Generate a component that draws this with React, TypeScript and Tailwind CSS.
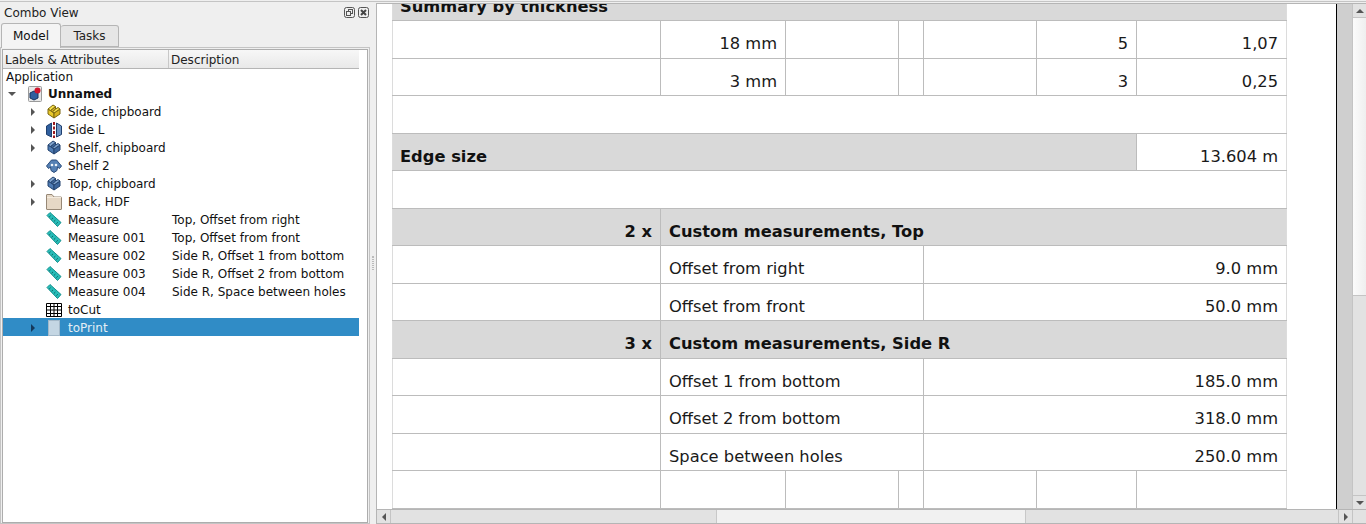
const sans = "font-['DejaVu_Sans',sans-serif]";

function PartIcon({ top, front, side, dark }: { top: string; front: string; side: string; dark: string }) {
  return (
    <svg width="16" height="16" viewBox="0 0 16 16">
      <path d="M2 5 L8 9 V14 L2 10 Z" fill={front} stroke={dark} strokeLinejoin="round" />
      <path d="M8 9 L14 5 V10 L8 14 Z" fill={side} stroke={dark} strokeLinejoin="round" />
      <path d="M6.5 7.7 L9.5 5 L12 3.5 L14 5 L8 9 Z" fill={top} stroke={dark} strokeLinejoin="round" />
      <path d="M4.5 6.5 L9.5 2.5 V5 L6.5 7.7 Z" fill={side} stroke={dark} strokeLinejoin="round" />
      <path d="M2 5 L7 1 L9.5 2.5 L4.5 6.5 Z" fill={top} stroke={dark} strokeLinejoin="round" />
    </svg>
  );
}

function RootIcon() {
  return (
    <svg width="16" height="16" viewBox="0 0 16 16">
      <rect x="1.5" y="0.5" width="13" height="15" rx="1" fill="#e8e8e8" stroke="#9a9a9a" />
      <path d="M3 7 L7 5 L11 7 V12 L7 14 L3 12 Z" fill="#2f5f9e" stroke="#16335e" />
      <circle cx="10.5" cy="4.5" r="3" fill="#d0142c" />
    </svg>
  );
}

function MirrorIcon() {
  return (
    <svg width="16" height="16" viewBox="0 0 16 16">
      <path d="M0.5 4 L5.5 1 V15 L0.5 12.5 Z" fill="#2f5f9e" stroke="#1f3f6e" />
      <path d="M15.5 4 L10.5 1 V15 L15.5 12.5 Z" fill="#6d94c4" stroke="#1f3f6e" />
      <path d="M8 0 V16" stroke="#9a1a20" strokeWidth="2" strokeDasharray="3 1.5" />
    </svg>
  );
}

function CloneIcon() {
  return (
    <svg width="16" height="16" viewBox="0 0 16 16">
      <path d="M0.5 8 L5.5 2 H10.5 L15.5 8 L13.5 10.5 L11.5 9 L11 12.5 L8 14.5 L5 12.5 L4.5 9 L2.5 10.5 Z" fill="#5580b4" stroke="#2a4c7c" strokeLinejoin="round" />
      <circle cx="6" cy="7" r="1.3" fill="#eef3f8" />
      <circle cx="10" cy="7" r="1.3" fill="#eef3f8" />
    </svg>
  );
}

function FolderIcon() {
  return (
    <svg width="16" height="16" viewBox="0 0 16 16">
      <path d="M0.5 1 Q0.5 0.5 1 0.5 H6 L8 3 H15 Q15.5 3 15.5 3.5 V15 Q15.5 15.5 15 15.5 H1 Q0.5 15.5 0.5 15 Z" fill="#e6d8c6" stroke="#978876" />
      <path d="M1 3.5 H15" stroke="#f4ebde" />
    </svg>
  );
}

function RulerIcon() {
  return (
    <svg width="16" height="16" viewBox="0 0 16 16">
      <path d="M1 3.5 L4 0.5 L15 10.5 L11.5 14.5 Z" fill="#27bcb8" stroke="#14908d" />
      <path d="M3.2 5 L4.6 3.7 M5.6 7.2 L7 5.9 M8 9.4 L9.4 8.1 M10.4 11.6 L11.8 10.3" stroke="#0b6665" />
    </svg>
  );
}

function SheetIcon() {
  return (
    <svg width="16" height="16" viewBox="0 0 16 16">
      <path d="M0.5 1.5 H15.5 V14.5 H0.5 Z M0.5 4.5 H15.5 M0.5 8 H15.5 M0.5 11.5 H15.5 M4.5 1.5 V14.5 M8 1.5 V14.5 M11.5 1.5 V14.5" fill="#fff" stroke="#000" />
    </svg>
  );
}

function PageIcon() {
  return (
    <svg width="16" height="16" viewBox="0 0 16 16">
      <rect x="2.5" y="0.5" width="11" height="15" fill="#c4d6e3" stroke="#a4b9c9" />
    </svg>
  );
}

const blue = { top: "#7ea2cc", front: "#4f7cb4", side: "#3d669c", dark: "#23436f" };
const yellow = { top: "#f5e04a", front: "#e8c92c", side: "#d6b21e", dark: "#7a650f" };

const treeRows = [
  { label: "Side, chipboard", icon: <PartIcon {...yellow} />, arrow: true },
  { label: "Side L", icon: <MirrorIcon />, arrow: true },
  { label: "Shelf, chipboard", icon: <PartIcon {...blue} />, arrow: true },
  { label: "Shelf 2", icon: <CloneIcon />, arrow: false },
  { label: "Top, chipboard", icon: <PartIcon {...blue} />, arrow: true },
  { label: "Back, HDF", icon: <FolderIcon />, arrow: true },
  { label: "Measure", desc: "Top, Offset from right", icon: <RulerIcon />, arrow: false },
  { label: "Measure 001", desc: "Top, Offset from front", icon: <RulerIcon />, arrow: false },
  { label: "Measure 002", desc: "Side R, Offset 1 from bottom", icon: <RulerIcon />, arrow: false },
  { label: "Measure 003", desc: "Side R, Offset 2 from bottom", icon: <RulerIcon />, arrow: false },
  { label: "Measure 004", desc: "Side R, Space between holes", icon: <RulerIcon />, arrow: false },
  { label: "toCut", icon: <SheetIcon />, arrow: false },
  { label: "toPrint", icon: <PageIcon />, arrow: true, selected: true },
];

function TreeRow({ row }: { row: (typeof treeRows)[number] }) {
  return (
    <div className={`flex h-[18px] items-center pt-[2px] ${row.selected ? "bg-[#308cc6] text-[#e4eef5]" : "text-[#111]"}`}>
      <div className="flex w-[43px] shrink-0 justify-end pr-[11px]">
        {row.arrow && (
          <div className={`h-0 w-0 border-y-[4px] border-l-[4px] border-y-transparent ${row.selected ? "border-l-[#14395c]" : "border-l-[#555]"}`} />
        )}
      </div>
      <div className="flex w-[22px] shrink-0">{row.icon}</div>
      <div className="w-[104px] shrink-0 whitespace-nowrap">{row.label}</div>
      <div className="whitespace-nowrap">{row.desc}</div>
    </div>
  );
}

function ComboView() {
  return (
    <div className="flex w-[370px] shrink-0 flex-col">
      <div className="flex h-[21px] items-center justify-between pl-[4px] pr-[1px] text-[#222]">
        <span>Combo View</span>
        <div className="flex gap-[3px]">
          <svg width="11" height="11" viewBox="0 0 11 11" fill="none" stroke="#555">
            <rect x="0.5" y="0.5" width="10" height="10" rx="2" />
            <rect x="4.5" y="2.5" width="4" height="4" />
            <rect x="2.5" y="4.5" width="4" height="4" fill="#efefef" />
          </svg>
          <svg width="11" height="11" viewBox="0 0 11 11" fill="none" stroke="#555">
            <rect x="0.5" y="0.5" width="10" height="10" rx="2" />
            <path d="M3 3 L8 8 M8 3 L3 8" strokeWidth="2" stroke="#444" />
          </svg>
        </div>
      </div>
      <div className="relative z-10 flex h-[25px] pl-[1px]">
        <div className="flex h-[25px] w-[60px] items-center justify-center rounded-t-[3px] border border-b-0 border-[#b5b5b5] bg-[#f4f4f4] text-[#111]">Model</div>
        <div className="mt-[2px] flex h-[22px] w-[58px] items-center justify-center rounded-t-[3px] border border-l-0 border-[#b5b5b5] bg-[#e6e6e6] text-[#222]">Tasks</div>
      </div>
      <div className="-mt-[1px] flex min-h-0 flex-1 border border-[#c4c4c4] bg-[#efefef] p-[1px] pb-0">
        <div className="flex min-w-0 flex-1 flex-col border border-[#adadad] bg-white pr-[8px]">
          <div className="flex h-[19px] shrink-0 border-b border-[#b5b5b5] bg-gradient-to-b from-[#f7f7f7] to-[#e9e9e9] text-[#222]">
            <div className="w-[166px] shrink-0 border-r border-[#c8c8c8] pl-[2px] pt-[1px]">Labels &amp; Attributes</div>
            <div className="flex-1 pl-[2px] pt-[1px]">Description</div>
          </div>
          <div className="h-[15px] shrink-0 pl-[3px] pt-[1px] leading-[15px] text-[#111]">Application</div>
          <div className="flex h-[18px] items-center pt-[2px] text-[#111]">
            <div className="flex w-[24px] shrink-0 justify-end pr-[11px]">
              <div className="h-0 w-0 border-x-[4px] border-t-[4px] border-x-transparent border-t-[#555]" />
            </div>
            <div className="flex w-[21px] shrink-0">
              <RootIcon />
            </div>
            <span className="font-bold">Unnamed</span>
          </div>
          {treeRows.map((row) => (
            <TreeRow key={row.label} row={row} />
          ))}
        </div>
      </div>
    </div>
  );
}

type Cell = { text?: string; span?: number; bold?: boolean; right?: boolean; white?: boolean };
type Row = { h: string; head?: boolean; cells: Cell[] };

const emptyCells: Cell[] = [{}, {}, {}, {}, {}, {}, {}];

const sheetRows: Row[] = [
  { h: "h-[38px]", head: true, cells: [{ text: "Summary by thickness", span: 7, bold: true }] },
  { h: "h-[38px]", cells: [{}, { text: "18 mm", right: true }, {}, {}, {}, { text: "5", right: true }, { text: "1,07", right: true }] },
  { h: "h-[37px]", cells: [{}, { text: "3 mm", right: true }, {}, {}, {}, { text: "3", right: true }, { text: "0,25", right: true }] },
  { h: "h-[38px]", cells: [{ span: 7 }] },
  { h: "h-[37px]", head: true, cells: [{ text: "Edge size", span: 6, bold: true }, { text: "13.604 m", right: true, white: true }] },
  { h: "h-[38px]", cells: [{ span: 7 }] },
  { h: "h-[37px]", head: true, cells: [{ text: "2 x", bold: true, right: true }, { text: "Custom measurements, Top", span: 6, bold: true }] },
  { h: "h-[38px]", cells: [{}, { text: "Offset from right", span: 3 }, { text: "9.0 mm", span: 3, right: true }] },
  { h: "h-[37px]", cells: [{}, { text: "Offset from front", span: 3 }, { text: "50.0 mm", span: 3, right: true }] },
  { h: "h-[38px]", head: true, cells: [{ text: "3 x", bold: true, right: true }, { text: "Custom measurements, Side R", span: 6, bold: true }] },
  { h: "h-[37px]", cells: [{}, { text: "Offset 1 from bottom", span: 3 }, { text: "185.0 mm", span: 3, right: true }] },
  { h: "h-[38px]", cells: [{}, { text: "Offset 2 from bottom", span: 3 }, { text: "318.0 mm", span: 3, right: true }] },
  { h: "h-[37px]", cells: [{}, { text: "Space between holes", span: 3 }, { text: "250.0 mm", span: 3, right: true }] },
  { h: "h-[38px]", cells: emptyCells },
];

function Sheet() {
  return (
    <table className="w-[894px] table-fixed border-collapse text-[16.3px] text-[#1a1a1a]">
      <colgroup>
        <col className="w-[268px]" />
        <col className="w-[125px]" />
        <col className="w-[113px]" />
        <col className="w-[25px]" />
        <col className="w-[113px]" />
        <col className="w-[100px]" />
        <col className="w-[150px]" />
      </colgroup>
      <tbody>
        {sheetRows.map((row, i) => (
          <tr key={i} className={`${row.h} ${row.head ? "bg-[#d9d9d9]" : ""}`}>
            {row.cells.map((cell, j) => (
              <td
                key={j}
                colSpan={cell.span}
                className={`overflow-hidden whitespace-nowrap border border-[#bcbcbc] px-[8px] pt-[9px] first:border-l-[#dcdcdc] first:pl-[7px] last:border-r-[#dcdcdc] ${i === 0 ? "pt-[11px]" : ""} ${cell.right ? "text-right" : "text-left"} ${cell.bold ? "font-bold text-[#111]" : ""} ${cell.white ? "bg-white" : ""}`}
              >
                {cell.text}
              </td>
            ))}
          </tr>
        ))}
      </tbody>
    </table>
  );
}

function Arrow({ dir }: { dir: "up" | "down" | "left" | "right" }) {
  const cls = {
    up: "border-x-[4px] border-b-[4px] border-x-transparent border-b-[#555]",
    down: "border-x-[4px] border-t-[4px] border-x-transparent border-t-[#555]",
    left: "border-y-[4px] border-r-[4px] border-y-transparent border-r-[#555]",
    right: "border-y-[4px] border-l-[4px] border-y-transparent border-l-[#555]",
  }[dir];
  return <div className={`h-0 w-0 ${cls}`} />;
}

function SheetView() {
  return (
    <div className="mt-[1px] flex min-w-0 flex-1 flex-col border-l border-t border-[#b5b5b5]">
      <div className="flex min-h-0 flex-1">
        <div className="flex min-w-0 flex-1 overflow-hidden bg-white pl-[15px]">
          <div className="-mt-[22px] w-[945px] shrink-0 border-r border-r-black">
            <Sheet />
          </div>
        </div>
        <div className="w-[15px] shrink-0 bg-[#cfcfcf]" />
        <div className="flex w-[14px] shrink-0 flex-col border-l border-[#c4c4c4] bg-[#e2e2e2]">
          <div className="flex h-[14px] shrink-0 items-center justify-center border-b border-[#c4c4c4]">
            <Arrow dir="up" />
          </div>
          <div className="h-[277px] shrink-0 bg-gradient-to-r from-[#fbfbfb] to-[#efefef]" />
          <div className="flex-1 border-t border-[#c4c4c4]" />
          <div className="flex h-[14px] shrink-0 items-center justify-center border-t border-[#c4c4c4]">
            <Arrow dir="down" />
          </div>
        </div>
      </div>
      <div className="flex h-[15px] shrink-0 border-y border-[#b5b5b5] bg-[#e2e2e2]">
        <div className="flex w-[14px] items-center justify-center border-r border-[#c4c4c4]">
          <Arrow dir="left" />
        </div>
        <div className="w-[325px] bg-[#e2e2e2]" />
        <div className="w-[310px] border-x border-[#c8c8c8] bg-[#f1f1f1]" />
        <div className="flex-1" />
        <div className="flex w-[14px] items-center justify-center border-l border-[#c4c4c4]">
          <Arrow dir="right" />
        </div>
        <div className="w-[14px] border-l border-[#c4c4c4]" />
      </div>
    </div>
  );
}

export default function App() {
  return (
    <div className={`flex h-[524px] w-[1366px] flex-col overflow-hidden bg-[#efefef] text-[12px] leading-[18px] ${sans}`}>
      <div className="mt-[1px] h-[1px] shrink-0 bg-[#c4c4c4]" />
      <div className="flex min-h-0 flex-1">
        <ComboView />
        <div className="flex w-[6px] shrink-0 items-center justify-center">
          <div className="h-[14px] w-[2px] border-x border-dotted border-[#bbb]" />
        </div>
        <SheetView />
      </div>
    </div>
  );
}
